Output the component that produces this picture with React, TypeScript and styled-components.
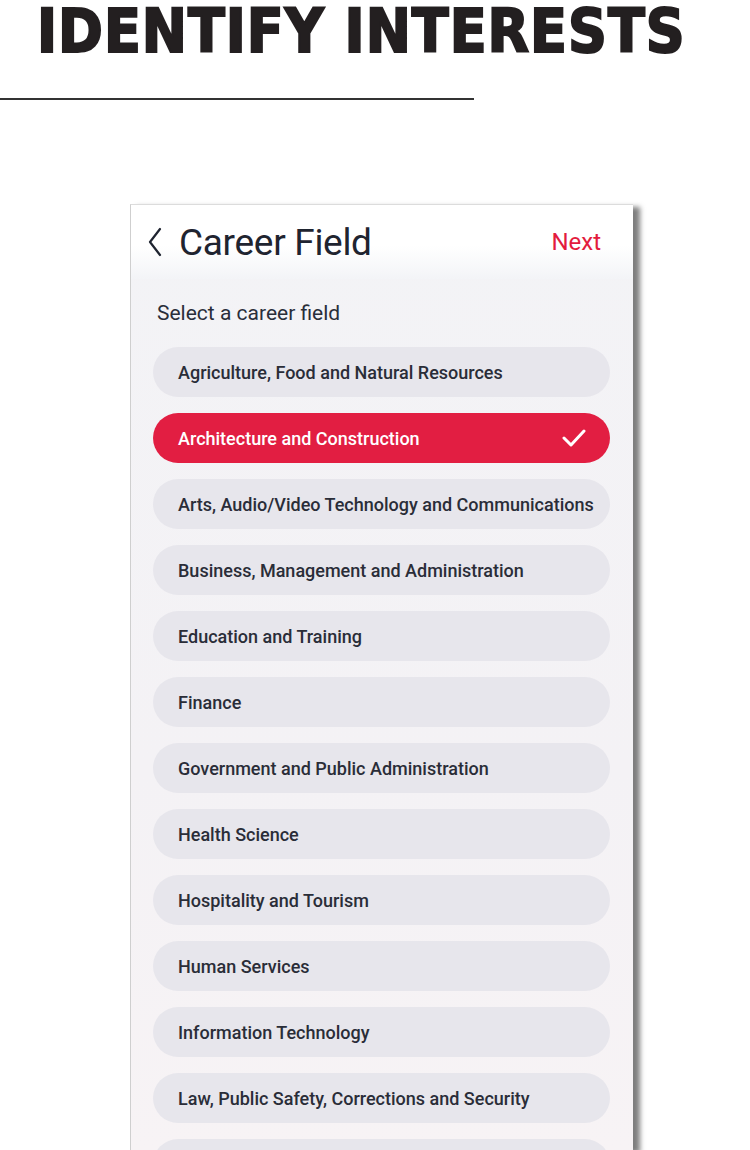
import React from 'react';
import styled, { createGlobalStyle } from 'styled-components';

const GlobalStyle = createGlobalStyle`
  html, body {
    margin: 0;
    padding: 0;
    background: #ffffff;
  }
  body {
    width: 750px;
    height: 1150px;
    overflow: hidden;
    font-family: Roboto, "Noto Sans", sans-serif;
  }
`;

const fields = [
  'Agriculture, Food and Natural Resources',
  'Architecture and Construction',
  'Arts, Audio/Video Technology and Communications',
  'Business, Management and Administration',
  'Education and Training',
  'Finance',
  'Government and Public Administration',
  'Health Science',
  'Hospitality and Tourism',
  'Human Services',
  'Information Technology',
  'Law, Public Safety, Corrections and Security',
];

const Page = styled.div`
  display: flex;
  flex-direction: column;
  width: 750px;
  height: 1150px;
  overflow: hidden;
`;

const Title = styled.h1`
  margin: 0;
  padding: 0 0 0 37px;
  height: 66px;
  flex-shrink: 0;
  font-family: "Liberation Sans Narrow", "DejaVu Sans Condensed", sans-serif;
  font-weight: 700;
  font-size: 60px;
  line-height: 62px;
  letter-spacing: 1px;
  color: #231f20;
  -webkit-text-stroke: 2px #231f20;
  white-space: nowrap;
`;

const Rule = styled.div`
  margin-top: 32px;
  width: 474px;
  height: 2px;
  flex-shrink: 0;
  background: #333333;
`;

const Stage = styled.div`
  display: flex;
  padding: 104px 0 0 130px;
`;

const Phone = styled.div`
  width: 502px;
  height: 945px;
  display: flex;
  flex-direction: column;
  overflow: hidden;
  border-top: 1px solid #dcdcdc;
  border-left: 1px solid #cfcfcf;
  background: linear-gradient(180deg, #f3f3f6 0%, #f4f2f5 60%, #f7f3f5 100%);
  box-shadow: 7px 3px 5px rgba(40, 40, 40, 0.6);
`;

const Header = styled.div`
  display: flex;
  align-items: center;
  flex-shrink: 0;
  height: 74px;
  padding: 0 32px 0 16px;
  background: linear-gradient(180deg, #ffffff 0%, #ffffff 55%, #f3f4f7 100%);
`;

const Back = styled.svg`
  width: 16px;
  height: 30px;
  margin-right: 16px;
`;

const HeaderTitle = styled.div`
  flex: 1;
  font-size: 37px;
  font-weight: 400;
  color: #1f2430;
  letter-spacing: -0.3px;
`;

const Next = styled.div`
  font-size: 24px;
  color: #e31b3d;
`;

const Subtitle = styled.div`
  flex-shrink: 0;
  padding: 22px 0 0 26px;
  height: 46px;
  box-sizing: border-box;
  font-size: 21px;
  color: #2a2e3a;
`;

const List = styled.div`
  display: flex;
  flex-direction: column;
  gap: 16px;
  padding: 22px 23px 0 22px;
`;

const Pill = styled.div<{ $active?: boolean }>`
  display: flex;
  align-items: center;
  justify-content: space-between;
  flex-shrink: 0;
  height: 50px;
  padding: 0 24px 0 25px;
  border-radius: 25px;
  background: ${(p) => (p.$active ? '#e21e42' : '#e7e6ec')};
  color: ${(p) => (p.$active ? '#ffffff' : '#2a2d38')};
  font-size: 18px;
  font-weight: 500;
  white-space: nowrap;
`;

const Check = styled.svg`
  width: 24px;
  height: 20px;
`;

export default function App() {
  return (
    <Page>
      <GlobalStyle />
      <Title>IDENTIFY INTERESTS</Title>
      <Rule />
      <Stage>
        <Phone>
          <Header>
            <Back viewBox="0 0 16 30">
              <path d="M13 2 L3 15 L13 28" fill="none" stroke="#1f2430" strokeWidth="2.2" strokeLinecap="round" strokeLinejoin="round" />
            </Back>
            <HeaderTitle>Career Field</HeaderTitle>
            <Next>Next</Next>
          </Header>
          <Subtitle>Select a career field</Subtitle>
          <List>
            {fields.map((f, i) => (
              <Pill key={f} $active={i === 1}>
                {f}
                {i === 1 && (
                  <Check viewBox="0 0 24 20">
                    <path d="M2 10 L9 17 L22 3" fill="none" stroke="#ffffff" strokeWidth="3" strokeLinecap="round" strokeLinejoin="round" />
                  </Check>
                )}
              </Pill>
            ))}
            <Pill />
          </List>
        </Phone>
      </Stage>
    </Page>
  );
}
